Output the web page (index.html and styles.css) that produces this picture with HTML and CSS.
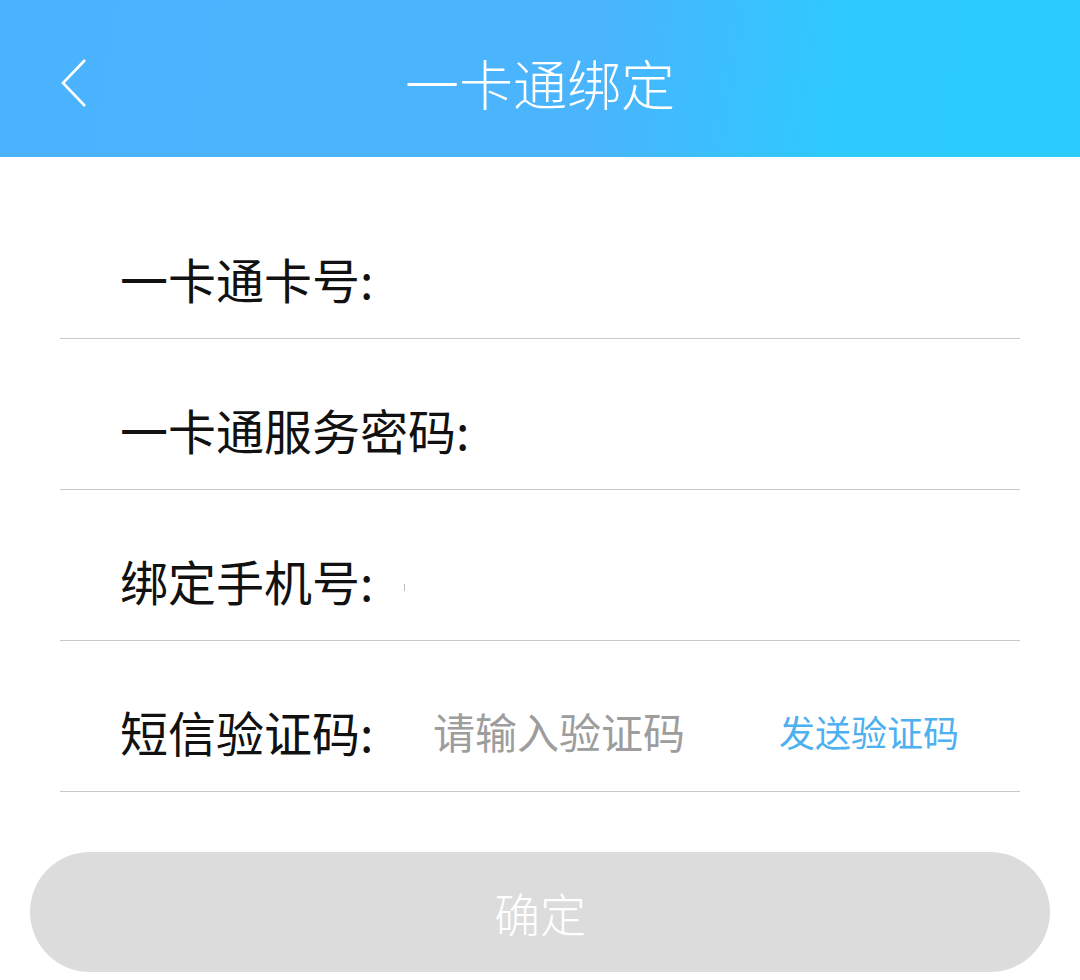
FILE: index.html
```html
<!DOCTYPE html>
<html lang="zh">
<head>
<meta charset="utf-8">
<title>一卡通绑定</title>
<link rel="stylesheet" href="styles.css">
</head>
<body>
<header class="topbar">
  <span class="back">
    <svg width="26" height="48" viewBox="0 0 26 48"><polyline points="24,1 2,24 24,47" fill="none" stroke="#fff" stroke-width="2.6"/></svg>
  </span>
  <h1 class="title">一卡通绑定</h1>
</header>
<main class="form">
  <div class="row"><span class="label">一卡通卡号:</span></div>
  <div class="row"><span class="label">一卡通服务密码:</span></div>
  <div class="row"><span class="label">绑定手机号:</span><span class="caret"></span></div>
  <div class="row"><span class="label">短信验证码:</span><span class="placeholder">请输入验证码</span><span class="send">发送验证码</span></div>
</main>
<div class="btnwrap"><button class="confirm">确定</button></div>
</body>
</html>
```
FILE: styles.css
```css
* { box-sizing: border-box; }
html, body { margin: 0; padding: 0; background: #fff; }
body {
  width: 1080px;
  font-family: "Noto Sans CJK SC", "Noto Sans", sans-serif;
}
.topbar {
  height: 157px;
  display: flex;
  align-items: center;
  justify-content: center;
  position: relative;
  background: linear-gradient(100deg, #4bb3fd 0%, #4ab4fd 55%, #2dcaff 78%, #2bcbff 100%);
}
.back {
  position: absolute;
  left: 61px;
  top: 59px;
  display: block;
  width: 26px;
  height: 48px;
}
.back svg { display: block; }
.title {
  margin: 0;
  color: #fff;
  font-size: 54px;
  font-weight: 300;
  letter-spacing: 0;
  line-height: 1;
  margin-top: 8px;
}
.form {
  margin: 31px 60px 0 60px;
}
.row {
  height: 151px;
  border-bottom: 1px solid #c9c9c9;
  display: flex;
  align-items: center;
  padding: 30px 0 0 60px;
}
.label {
  font-size: 48px;
  color: #111;
  line-height: 1;
  width: 312px;
  flex: none;
  white-space: nowrap;
}
.caret {
  width: 1px;
  height: 7px;
  background: #bbb;
  margin-left: -28px;
  margin-top: 14px;
}
.placeholder {
  font-size: 42px;
  color: #9d9d9d;
  line-height: 1;
  margin-left: 1px;
}
.send {
  margin-left: auto;
  margin-right: 61px;
  font-size: 36px;
  color: #4db0f0;
  line-height: 1;
}
.btnwrap {
  padding: 60px 30px 0 30px;
}
.confirm {
  display: block;
  width: 100%;
  height: 120px;
  border: none;
  border-radius: 60px;
  background: #dcdcdc;
  color: #fff;
  font-family: "Noto Sans CJK SC", "Noto Sans", sans-serif;
  font-size: 46px;
  font-weight: 300;
  line-height: 1;
  padding: 0;
}
```
